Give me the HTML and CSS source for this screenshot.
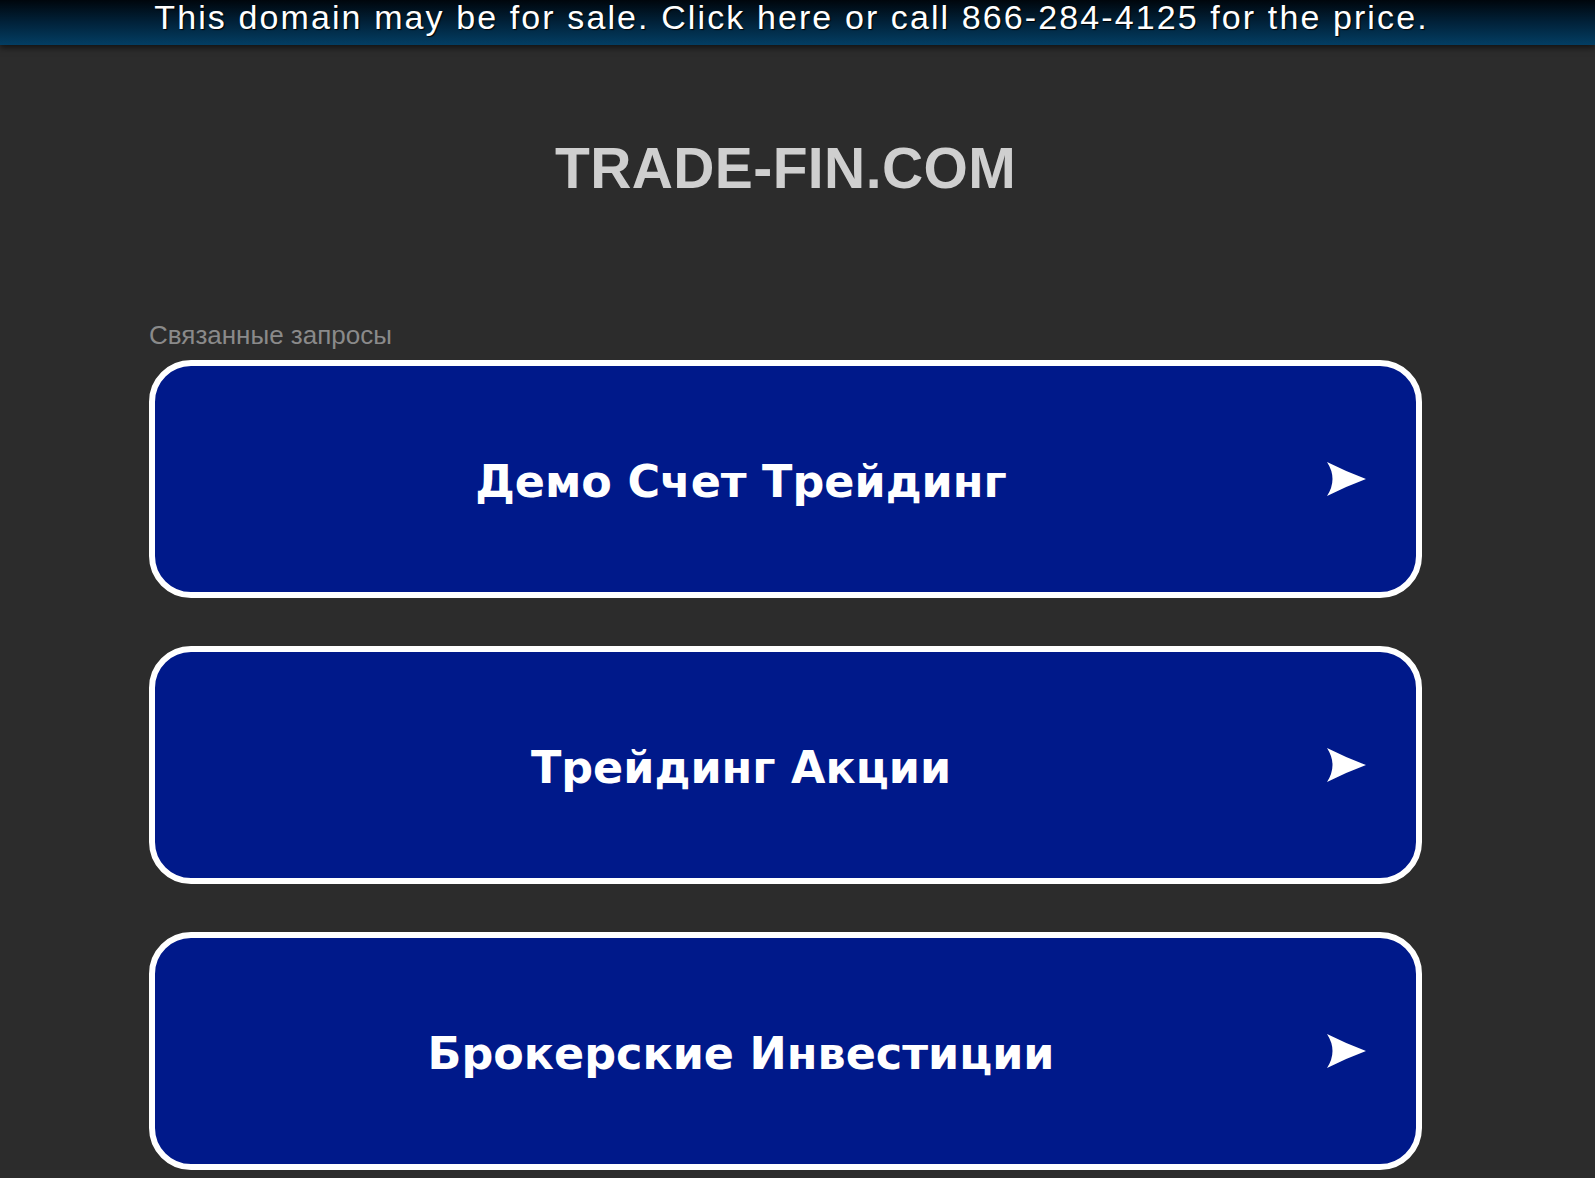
FILE: index.html
```html
<!DOCTYPE html>
<html lang="ru">
<head>
<meta charset="utf-8">
<title>trade-fin.com</title>
<link rel="stylesheet" href="styles.css">
</head>
<body>
<div class="topbar"><span class="topbar-text">This domain may be for sale. Click here or call 866-284-4125 for the price.</span></div>
<div class="main">
  <div class="container">
    <h1 class="title">TRADE-FIN.COM</h1>
    <div class="label">Связанные запросы</div>
    <div class="links">
      <a class="link" href="#"><span class="link-text">Демо Счет Трейдинг</span><svg class="arrow" viewBox="0 0 39 34" width="39" height="34"><path d="M0 0 Q20 10 39 17 Q20 24 0 34 Q11 17 0 0 Z" fill="#fff"/></svg></a>
      <a class="link" href="#"><span class="link-text">Трейдинг Акции</span><svg class="arrow" viewBox="0 0 39 34" width="39" height="34"><path d="M0 0 Q20 10 39 17 Q20 24 0 34 Q11 17 0 0 Z" fill="#fff"/></svg></a>
      <a class="link" href="#"><span class="link-text">Брокерские Инвестиции</span><svg class="arrow" viewBox="0 0 39 34" width="39" height="34"><path d="M0 0 Q20 10 39 17 Q20 24 0 34 Q11 17 0 0 Z" fill="#fff"/></svg></a>
    </div>
  </div>
</div>
</body>
</html>
```
FILE: styles.css
```css
html, body {
  margin: 0;
  padding: 0;
  background: #2c2c2c;
}
body {
  font-family: "Liberation Sans", Arial, sans-serif;
}
.topbar {
  height: 45px;
  background: linear-gradient(to bottom, #00060c 0%, #01223a 50%, #033e63 100%);
  box-shadow: 0 3px 6px rgba(0, 0, 0, 0.55);
  text-align: center;
  padding-right: 12px;
  position: relative;
}
.topbar-text {
  display: block;
  font-family: "Liberation Sans", Arial, sans-serif;
  font-size: 34px;
  line-height: 35px;
  letter-spacing: 2.1px;
  color: #ffffff;
  text-shadow: 1px 1px 1px #000000;
  white-space: nowrap;
}
.main {
  padding-right: 24px;
}
.container {
  width: 1273px;
  margin: 0 auto;
}
.title {
  margin: 95px 0 0 0;
  font-family: "Liberation Sans", Arial, sans-serif;
  font-weight: bold;
  font-size: 57px;
  line-height: 57px;
  letter-spacing: 0.4px;
  color: #cfcfcf;
  text-align: center;
}
.label {
  margin-top: 123px;
  font-size: 26px;
  line-height: 30px;
  color: #8a8a8a;
}
.links {
  margin-top: 10px;
  display: flex;
  flex-direction: column;
  gap: 48px;
}
.link {
  box-sizing: border-box;
  height: 238px;
  border: 6px solid #ffffff;
  border-radius: 42px;
  background: #00198a;
  display: flex;
  align-items: center;
  text-decoration: none;
}
.link-text {
  flex: 1;
  text-align: center;
  font-family: "DejaVu Sans", Verdana, sans-serif;
  font-weight: bold;
  font-size: 44.5px;
  color: #ffffff;
  padding-top: 4px;
}
.arrow {
  flex: none;
  margin-right: 50px;
}
```
